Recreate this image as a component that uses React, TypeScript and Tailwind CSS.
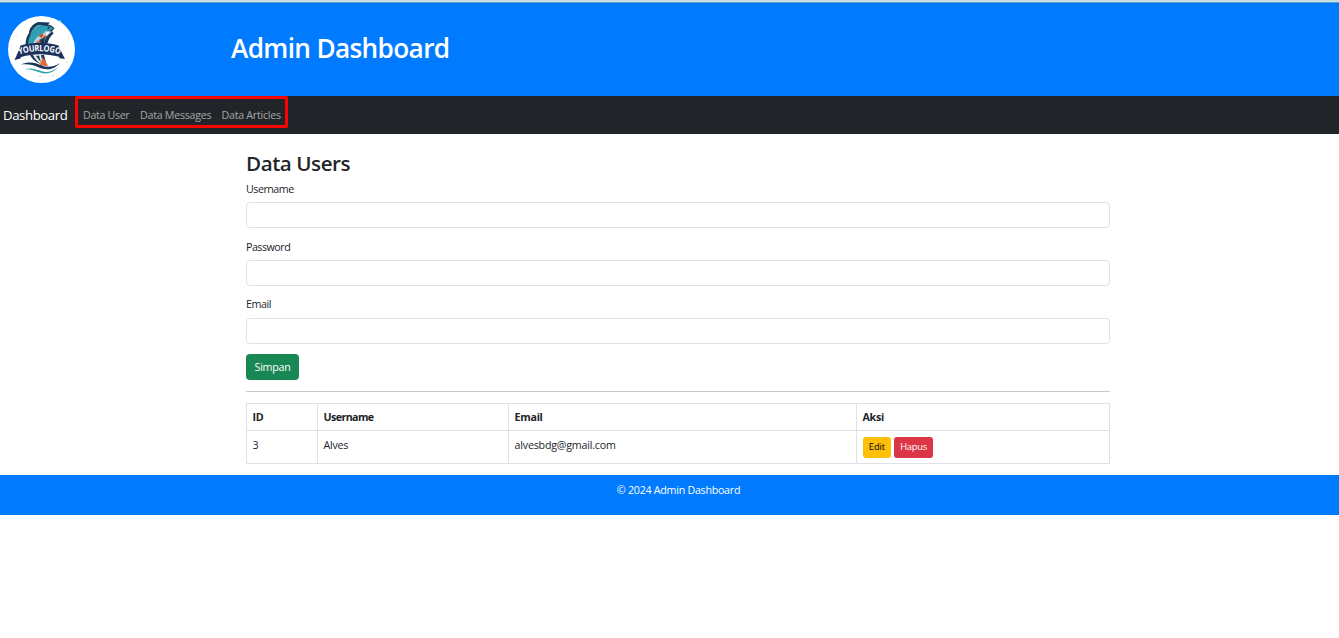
import React from "react";

function Logo() {
  return (
    <svg className="block h-[67px] w-[67px]" viewBox="0 0 67 67" role="img" aria-label="Logo">
      <circle cx="33.5" cy="33.5" r="33.5" fill="#fff" />
      <g fill="#dcdce0">
        <circle cx="52" cy="5" r=".8" />
        <circle cx="61" cy="20" r=".8" />
        <circle cx="8" cy="20" r=".8" />
        <circle cx="59" cy="46" r=".9" />
        <circle cx="45" cy="60" r=".9" />
        <circle cx="32" cy="60" r=".9" />
      </g>
      <path d="M18 31C17 26 18 21 21 17c0-4 3-8 7-10l2-1 12 .5-2 2c3 .5 5 2 6.500 4L44 15l1.500 2.500C43 20 41 22 40 26l-3 6z" fill="#1d3556" />
      <path d="M20 30c0-9 4-18 14-20 5-1 9 .3 11.500 2.500L41 15c-9 2-15 8-17 16z" fill="#2f9fb4" />
      <path d="M22 19c2-5 4-8 8-10h7c-7 1-11 4-15 10z" fill="#4fb5c3" />
      <path d="M24 31c2-9 8-14 17-16l3 .8c-4 2-6 5-7 8l-2 7z" fill="#b9d3df" />
      <path d="M37 15c1.500 2 1.500 4 0 7l5-5.500z" fill="#eef4f7" />
      <circle cx="40.500" cy="12" r="1" fill="#122b49" />
      <path d="M30.500 20l4-3c1.500 1.500 1 3.500-1 5zM37 19l2 1-2 3-2-1z" fill="#c65333" />
      <path d="M31 24l6-3-1 7-5 1z" fill="#1d3556" />
      <path d="M28 26l4-2 1 4-4 2z" fill="#d06a4a" />
      <path d="M22 39h14c1 4 2 7 2 11-7-2-13-5-16-11z" fill="#1d3556" />
      <path d="M25 39h8l2 10c-5-2-8-6-10-10z" fill="#e9eef2" />
      <path d="M28 40l3-.5 2 7z" fill="#1d3556" />
      <path d="M34 41c3 3 5 6 6 9.500-4-1.500-7-1.500-11 .8 4-3.300 5-6 5-10.300z" fill="#df6a35" />
      <path d="M12.500 29.500C25 25.800 38 25.800 50.500 29.500L52 33l5 10-5.500-.7-.5-1.600C38 37.300 26 37.300 13 41l-.5 1.500L6.500 44 11 34z" fill="#1c315e" />
      <path id="logo-arc" d="M8.500 39.600C23 33.700 40 33.700 54.500 39.600" fill="none" />
      <text fill="#fff" fontSize="8.800" fontWeight="700" fontFamily="'Open Sans', sans-serif">
        <textPath href="#logo-arc" startOffset="50%" textAnchor="middle" textLength="41" lengthAdjust="spacingAndGlyphs">YOURLOGO</textPath>
      </text>
      <path d="M13 48.500c8-3.500 14-2 20 .7 6 2.500 12 2.300 19-2.200-6 7-14 7.500-21 4.500-6-2.700-11-3.700-18-3z" fill="#1c315e" />
      <path d="M16 53.500c7-2.500 12 0 17 1.500 6 2 11 1 17-4-5 6.500-12 7.500-18 5.500-5-1.500-10-4-16-3z" fill="#2ba5a8" />
    </svg>
  );
}

const fields: { name: string; type: string; gap: string }[] = [
  { name: "Username", type: "text", gap: "mb-[11px]" },
  { name: "Password", type: "password", gap: "mb-[10px]" },
  { name: "Email", type: "email", gap: "mb-[10px]" },
];

export default function App() {
  return (
    <div className="min-h-[638px] bg-white font-['Open_Sans',sans-serif] text-[10.7px] leading-4 tracking-[-0.27px] text-[#212529]">
      <div className="h-[3px] border-b border-[#5f9fc4] bg-[#c8e0e2]" />
      <header className="flex h-[93px] items-center bg-[#007bff] pl-2">
        <Logo />
        <h1 className="mb-[3px] ml-[156px] text-[26.2px] leading-8 font-semibold tracking-[-0.65px] whitespace-nowrap text-white">Admin Dashboard</h1>
      </header>
      <nav className="flex h-[38px] items-start bg-[#212529]">
        <a className="mt-[9px] w-[75px] pl-[3px] text-[13.2px] leading-5 tracking-[-0.4px] whitespace-nowrap text-white">Dashboard</a>
        <div className="flex h-8 w-[213px] items-center rounded-[2px] border-[3px] border-[#ff0000] pt-[5px] pl-[5px] whitespace-nowrap text-[#a3a5a6]">
          <a className="w-[57px] tracking-[-0.35px]">Data User</a>
          <a className="w-[81.5px]">Data Messages</a>
          <a>Data Articles</a>
        </div>
      </nav>
      <main className="ml-[246px] w-[864px] pt-[17px]">
        <h2 className="mb-[5px] text-[20.6px] leading-[25px] font-semibold tracking-[-0.45px]">Data Users</h2>
        <form>
          {fields.map((f) => (
            <div key={f.name} className={f.gap}>
              <label className={f.name === "Email" ? "mb-[6px] block tracking-[-0.4px]" : "mb-[5px] block tracking-[-0.5px]"}>{f.name}</label>
              <input type={f.type} className="block h-[26px] w-full rounded-[4px] border border-[#dee2e6] px-2 outline-none" />
            </div>
          ))}
          <button type="button" className="block h-[26px] w-[53px] rounded-[4px] bg-[#198754] text-white">Simpan</button>
        </form>
        <hr className="mt-[11px] mb-[11px] border-t border-[#c7c8c9]" />
        <table className="w-full table-fixed border-collapse text-left [&_td]:border [&_td]:border-[#dee2e6] [&_td]:pl-[5.5px] [&_th]:border [&_th]:border-[#dee2e6] [&_th]:pl-[5.5px]">
          <colgroup>
            <col className="w-[71px]" />
            <col className="w-[191px]" />
            <col className="w-[348px]" />
            <col />
          </colgroup>
          <thead>
            <tr className="h-[27px]">
              <th>ID</th>
              <th className="tracking-[-0.6px]">Username</th>
              <th>Email</th>
              <th>Aksi</th>
            </tr>
          </thead>
          <tbody>
            <tr className="h-[33px] align-top">
              <td className="pt-[6px]">3</td>
              <td className="pt-[6px]">Alves</td>
              <td className="pt-[6px] tracking-[-0.2px]">alvesbdg@gmail.com</td>
              <td className="pt-[6px]">
                <div className="ml-[0.5px] flex gap-[3px] text-[9.4px]">
                  <button type="button" className="h-[21px] w-7 rounded-[3px] bg-[#ffc107] pb-px tracking-[-0.1px] text-black">Edit</button>
                  <button type="button" className="h-[21px] w-[39px] rounded-[3px] bg-[#dc3545] pb-px text-white">Hapus</button>
                </div>
              </td>
            </tr>
          </tbody>
        </table>
      </main>
      <footer className="mt-[11px] h-10 bg-[#007bff] pt-[7px] pl-[18px] text-center text-white">© 2024 Admin Dashboard</footer>
    </div>
  );
}
